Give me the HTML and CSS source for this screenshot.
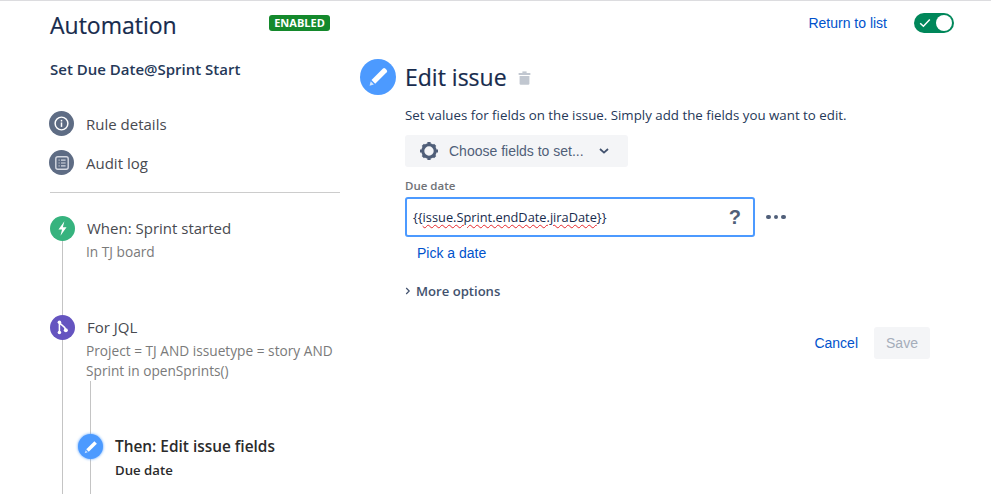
FILE: index.html
```html
<!DOCTYPE html>
<html lang="en">
<head>
<meta charset="utf-8">
<title>Automation</title>
<link rel="stylesheet" href="styles.css">
</head>
<body>
<div class="page">
  <aside class="side">
    <div class="side-head">
      <h1 class="app-title">Automation</h1>
      <span class="badge">ENABLED</span>
    </div>
    <div class="rule-name">Set Due Date@Sprint Start</div>
    <nav class="nav">
      <div class="nav-item">
        <span class="dot dot-slate">
          <svg viewBox="0 0 16 16" width="17" height="17"><circle cx="8" cy="8" r="6" fill="none" stroke="#fff" stroke-width="1.4"/><rect x="7.3" y="7" width="1.4" height="4.2" fill="#fff"/><rect x="7.3" y="4.6" width="1.4" height="1.5" fill="#fff"/></svg>
        </span>
        <span>Rule details</span>
      </div>
      <div class="nav-item">
        <span class="dot dot-slate">
          <svg viewBox="0 0 16 16" width="16" height="16"><rect x="1.8" y="1.8" width="12.4" height="12.4" rx="2" fill="none" stroke="#d5d9e2" stroke-width="1.4"/><path d="M4.6 5.2h1M7 5.2h4.6M4.6 8h1M7 8h4.6M4.6 10.8h1M7 10.8h4.6" stroke="#d5d9e2" stroke-width="1.2"/></svg>
        </span>
        <span>Audit log</span>
      </div>
    </nav>
    <div class="divider"></div>
    <div class="flow">
      <div class="step step-when">
        <span class="dot dot-green">
          <svg viewBox="0 0 16 16" width="19" height="19"><path d="M9.6 1.8 4.6 8.8h3L6.3 14.2l5.1-7.2H8.3z" fill="#fff"/></svg>
        </span>
        <div class="step-body">
          <div class="step-title">When: Sprint started</div>
          <div class="step-sub">In TJ board</div>
        </div>
      </div>
      <div class="step step-for">
        <span class="dot dot-purple">
          <svg viewBox="0 0 16 16" width="19" height="19"><path d="M5.4 3.4v9M5.4 3.6c.5 2.4 4.4 2.6 5.2 6" fill="none" stroke="#fff" stroke-width="1.3"/><circle cx="5.4" cy="3.6" r="1.5" fill="#fff"/><circle cx="5.4" cy="12.2" r="1.5" fill="#fff"/><circle cx="10.800" cy="10.400" r="1.700" fill="#fff"/></svg>
        </span>
        <div class="step-body">
          <div class="step-title">For JQL</div>
          <div class="step-sub">Project = TJ AND issuetype = story AND Sprint in openSprints()</div>
        </div>
      </div>
      <div class="branch">
        <div class="step step-then">
          <span class="dot dot-blue">
            <svg viewBox="0 0 16 16" width="18" height="18"><path d="M11 2.800 13.200 5 6 12.200 3.800 10z" fill="#fff"/><path d="M3.300 10.900 5.100 12.700 2.400 13.600z" fill="#fff" opacity=".7"/></svg>
          </span>
          <div class="step-body">
            <div class="step-title step-title-bold">Then: Edit issue fields</div>
            <div class="step-sub step-sub-bold">Due date</div>
          </div>
        </div>
      </div>
    </div>
  </aside>

  <main class="main">
    <div class="topbar">
      <a class="link link-return">Return to list</a>
      <span class="toggle">
        <svg class="toggle-check" viewBox="0 0 12 10" width="12" height="10"><path d="M1.200 5.200 4.400 8.200 10.800 1.600" fill="none" stroke="#fff" stroke-width="1.500"/></svg>
        <span class="toggle-knob"></span>
      </span>
    </div>
    <div class="editor">
      <span class="editor-icon">
        <svg viewBox="0 0 24 24" width="26" height="26"><path d="M16.600 4.200a1.500 1.500 0 0 1 2.100 0l1.300 1.300a1.500 1.500 0 0 1 0 2.100L9.400 18.200 6 14.800z" fill="#fff"/><path d="M5.300 16 8.200 18.900 4.200 20z" fill="#fff" opacity=".75"/></svg>
      </span>
      <div class="editor-body">
        <div class="editor-head">
          <h2 class="editor-title">Edit issue</h2>
          <svg class="trash" viewBox="0 0 13 14" width="13" height="14"><rect x="4.400" y="0.400" width="4.200" height="2" fill="#c1c7d0"/><rect x="0.600" y="2" width="11.800" height="2" rx=".6" fill="#c1c7d0"/><path d="M1.600 5h9.800v7.600a1.200 1.200 0 0 1-1.200 1.200H2.800a1.200 1.200 0 0 1-1.200-1.200z" fill="#c1c7d0"/></svg>
        </div>
        <p class="editor-desc">Set values for fields on the issue. Simply add the fields you want to edit.</p>
        <button class="choose" type="button">
          <svg viewBox="0 0 20 20" width="20" height="20"><circle cx="10" cy="10" r="6.200" fill="none" stroke="#505f79" stroke-width="3"/><path d="M8.400 1h3.200v3H8.400zM8.400 16h3.200v3H8.400zM1 8.400h3v3.200H1zM16 8.400h3v3.200h-3zM2.700 5 5 2.700 7.100 4.800 4.800 7.100zM12.900 15.200l2.300-2.300 2.100 2.100-2.300 2.300zM2.700 15l2.100-2.100 2.300 2.300L5 17.300zM12.900 4.800 15 2.700 17.300 5l-2.100 2.100z" fill="#505f79"/></svg>
          <span class="choose-label">Choose fields to set...</span>
          <svg class="choose-caret" viewBox="0 0 10 6" width="10" height="6"><path d="M1 1l4 3.600L9 1" fill="none" stroke="#42526e" stroke-width="1.800"/></svg>
        </button>
        <label class="field-label">Due date</label>
        <div class="field-row">
          <div class="field">
            <span class="field-value">{{<span class="squiggle">issue.Sprint.endDate.jiraDate</span>}}</span>
            <span class="help">?</span>
          </div>
          <span class="more-dots"><i></i><i></i><i></i></span>
        </div>
        <a class="link link-pick">Pick a date</a>
        <div class="more-options">
          <svg viewBox="0 0 6 8" width="6" height="8"><path d="M1.200 1l3 3-3 3" fill="none" stroke="#42526e" stroke-width="1.200"/></svg>
          <span>More options</span>
        </div>
        <div class="actions">
          <a class="link link-cancel">Cancel</a>
          <button class="save" type="button" disabled>Save</button>
        </div>
      </div>
    </div>
  </main>
</div>
</body>
</html>
```

FILE: styles.css
```css
* { box-sizing: border-box; }
html, body { margin: 0; height: 100%; }
body {
  background: #fff;
  font-family: "Open Sans", "Noto Sans", sans-serif;
  color: #172b4d;
  overflow: hidden;
}
.page {
  height: 494px;
  border-top: 1px solid #dcdcdf;
  display: flex;
  overflow: hidden;
}
.side { width: 360px; flex: none; padding-left: 50px; }
.side-head { display: flex; align-items: flex-start; height: 50px; padding-top: 6px; }
.app-title {
  margin: 0;
  width: 219px;
  font-size: 23px;
  line-height: 36px;
  font-weight: 400;
  color: #172b4d;
  -webkit-text-stroke: .2px #172b4d;
}
.badge {
  margin-top: 8px;
  width: 61px;
  height: 16px;
  background: #14892c;
  color: #fff;
  border-radius: 3px;
  font-size: 11px;
  font-weight: 700;
  line-height: 16px;
  text-align: center;
}
.rule-name {
  margin-top: 7px;
  font-size: 15px;
  line-height: 22px;
  font-weight: 600;
  color: #253858;
}
.nav { margin-top: 31px; display: flex; flex-direction: column; gap: 14px; margin-left: -1px; }
.nav-item {
  display: flex;
  align-items: center;
  gap: 12px;
  height: 25px;
  font-size: 15px;
  color: #484a50;
}
.dot {
  width: 25px;
  height: 25px;
  flex: none;
  border-radius: 50%;
  display: flex;
  align-items: center;
  justify-content: center;
}
.dot-slate { background: #5e6c84; }
.dot-green { background: #36b37e; }
.dot-purple { background: #6554c0; }
.dot-blue { background: #4c9aff; box-shadow: 0 0 3px #4c9aff; }
.divider { width: 290px; height: 1px; background: #ccc; margin-top: 17px; }
.flow { position: relative; margin-top: 23px; height: 300px; }
.flow::before {
  content: "";
  position: absolute;
  left: 12px;
  top: 25px;
  bottom: 0;
  width: 1px;
  background: #c4c4c4;
}
.step { display: flex; gap: 12px; position: relative; }
.step-body { min-width: 0; }
.step-title { font-size: 15px; line-height: 25px; color: #484a50; }
.step-sub {
  width: 255px;
  margin-top: 1px;
  margin-left: -1px;
  font-size: 13.700px;
  line-height: 20px;
  color: #7a7a7a;
}
.step-when { height: 99px; }
.step-for { height: 99px; }
.branch { position: relative; padding-left: 28px; margin-top: 20px; }
.branch::before {
  content: "";
  position: absolute;
  left: 40px;
  top: -53px;
  height: 200px;
  width: 1px;
  background: #c4c4c4;
}
.step-title-bold { font-weight: 600; color: #2b2b2b; font-size: 15.400px; }
.step-sub-bold { font-weight: 600; color: #2b2b2b; margin: 1px 0 0; font-size: 13.200px; }

.main { flex: 1; padding-right: 37px; min-width: 0; }
.topbar { display: flex; justify-content: flex-end; align-items: center; height: 44px; gap: 27px; }
.link { color: #0052cc; font-family: "Liberation Sans", Arial, sans-serif; font-size: 14px; }
.toggle {
  width: 40px;
  height: 20px;
  border-radius: 10px;
  background: #00875a;
  position: relative;
  display: block;
}
.toggle-check { position: absolute; left: 5px; top: 5px; }
.toggle-knob {
  position: absolute;
  right: 2px;
  top: 2px;
  width: 16px;
  height: 16px;
  border-radius: 50%;
  background: #fff;
}
.editor { display: flex; gap: 9px; margin-top: 14px; }
.editor-icon {
  width: 36px;
  height: 36px;
  flex: none;
  border-radius: 50%;
  background: #4c9aff;
  display: flex;
  align-items: center;
  justify-content: center;
}
.editor-body { flex: 1; min-width: 0; }
.editor-head { display: flex; align-items: center; gap: 11px; height: 36px; }
.editor-title { margin: 0; font-size: 23px; font-weight: 500; line-height: 36px; color: #172b4d; -webkit-text-stroke: .2px #172b4d; }
.trash { margin-top: 1px; }
.editor-desc { margin: 10px 0 0; font-size: 13.300px; line-height: 20px; color: #253858; }
.choose {
  margin-top: 10px;
  width: 223px;
  height: 32px;
  border: 0;
  border-radius: 3px;
  background: #f4f5f7;
  display: flex;
  align-items: center;
  padding: 0 0 0 14px;
  font-family: "Liberation Sans", Arial, sans-serif;
  font-size: 14px;
  color: #505f79;
}
.choose-label { margin-left: 10px; }
.choose-caret { margin-left: 15px; }
.field-label {
  display: block;
  margin-top: 10px;
  font-size: 11.500px;
  line-height: 18px;
  font-weight: 600;
  color: #6f7277;
}
.field-row { display: flex; align-items: center; gap: 11px; margin-top: 2px; }
.field {
  width: 350px;
  height: 40px;
  border: 2px solid #4c9aff;
  border-radius: 3px;
  display: flex;
  align-items: center;
  justify-content: space-between;
  padding: 0 12px 0 6px;
  font-size: 12.800px;
  color: #172b4d;
}
.squiggle { text-decoration: underline wavy #e5272b 1px; text-underline-offset: 2px; }
.help { font-size: 20px; font-weight: 700; color: #505f79; font-family: "Liberation Sans", Arial, sans-serif; }
.more-dots { display: flex; gap: 3px; }
.more-dots i { width: 4.500px; height: 4.500px; border-radius: 50%; background: #505f79; display: block; }
.link-pick { display: block; margin: 6px 0 0 12px; line-height: 20px; }
.more-options {
  display: flex;
  align-items: center;
  gap: 5px;
  margin-top: 18px;
  font-size: 13.100px;
  font-weight: 600;
  line-height: 20px;
  color: #42526e;
}
.actions {
  display: flex;
  justify-content: flex-end;
  align-items: center;
  gap: 16px;
  margin-top: 26px;
  padding-right: 24px;
}
.save {
  width: 56px;
  height: 32px;
  border: 0;
  border-radius: 3px;
  background: #f4f5f7;
  color: #a5adba;
  font-family: "Liberation Sans", Arial, sans-serif;
  font-size: 14px;
}
```
